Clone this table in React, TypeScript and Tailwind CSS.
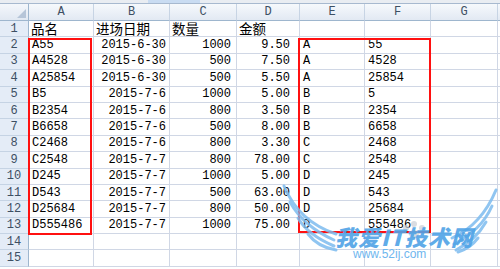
import React from "react";

type Row = string[];

const cols = [
  { letter: "A", w: "w-[65px]", align: "justify-start pl-[3px]" },
  { letter: "B", w: "w-[76px]", align: "justify-end pr-[3px]" },
  { letter: "C", w: "w-[67px]", align: "justify-end pr-[5px]" },
  { letter: "D", w: "w-[63px]", align: "justify-end pr-[9px]" },
  { letter: "E", w: "w-[65px]", align: "justify-start pl-[3px]" },
  { letter: "F", w: "w-[66px]", align: "justify-start pl-[3px]" },
  { letter: "G", w: "w-[67px]", align: "justify-start pl-[3px]" },
  { letter: "", w: "w-[40px]", align: "justify-start pl-[3px]" },
];

const rows: Row[] = [
  ["品名", "进场日期", "数量", "金额", "", ""],
  ["A55", "2015-6-30", "1000", "9.50", "A", "55"],
  ["A4528", "2015-6-30", "500", "7.50", "A", "4528"],
  ["A25854", "2015-6-30", "500", "5.50", "A", "25854"],
  ["B5", "2015-7-6", "1000", "5.00", "B", "5"],
  ["B2354", "2015-7-6", "800", "3.50", "B", "2354"],
  ["B6658", "2015-7-6", "500", "8.00", "B", "6658"],
  ["C2468", "2015-7-6", "800", "3.30", "C", "2468"],
  ["C2548", "2015-7-7", "800", "78.00", "C", "2548"],
  ["D245", "2015-7-7", "1000", "5.00", "D", "245"],
  ["D543", "2015-7-7", "500", "63.00", "D", "543"],
  ["D25684", "2015-7-7", "800", "50.00", "D", "25684"],
  ["D555486", "2015-7-7", "1000", "75.00", "D", "555486"],
  [],
  [],
];

// site watermark stamped over the bottom right of the sheet
const Watermark = () => (
  <div className="absolute left-[280px] top-[180px] w-[220px] h-[89px] pointer-events-none">
    <svg width="220" height="89" viewBox="0 0 220 89" className="absolute left-0 top-0" fill="none">
      <g stroke="#7dbcef" strokeWidth="3" strokeLinecap="round" opacity="0.85">
        <path d="M4 6 C14 30 32 46 56 54" />
        <path d="M10 22 C20 40 36 52 54 60" />
        <path d="M18 38 C26 52 40 60 54 66" />
        <path d="M28 54 C34 62 44 68 56 70" />
        <path d="M216 10 C206 34 190 50 172 58" />
        <path d="M212 26 C204 44 190 56 174 64" />
        <path d="M206 42 C198 56 188 64 176 70" />
        <path d="M198 58 C192 66 184 70 178 72" />
      </g>
      <g fill="#c9ced6" opacity="0.7">
        <circle cx="126" cy="48" r="3" />
        <circle cx="134" cy="44" r="3" />
        <circle cx="142" cy="48" r="3" />
        <ellipse cx="134" cy="54" rx="5" ry="4" />
      </g>
    </svg>
    <div className="absolute left-[55px] top-[45px] text-[22px] leading-none font-black italic tracking-[1px] text-[#4fa3e6] opacity-90 [font-family:'Noto_Sans_CJK_SC',sans-serif]">
      我爱IT技术网
    </div>
    <div className="absolute left-[73px] top-[68px] text-[12px] leading-none text-[#6fb6ee] [font-family:'Liberation_Sans',sans-serif]">
      www.52ij.com
    </div>
  </div>
);

export default function App() {
  return (
    <div className="relative w-[500px] h-[269px] overflow-hidden bg-white text-black [font-family:'Liberation_Mono','Noto_Sans_CJK_SC',monospace]">
      {/* strip left over from the ribbon above */}
      <div className="flex h-[3px] bg-[#e9edf2]">
        <div className="w-[148px]" />
        <div className="w-[52px] bg-[#c9dcf2]" />
      </div>

      {/* column headers */}
      <div className="flex h-[18px] border-t border-[#a7b9cf]">
        <div className="relative w-[29px] shrink-0 border-r border-b border-[#9eb6ce] bg-gradient-to-b from-[#f4f7fb] to-[#e1e8f2]">
          <div className="absolute right-[2px] bottom-[2px] w-0 h-0 border-l-[9px] border-l-transparent border-b-[9px] border-b-[#b6c5d8]" />
        </div>
        {cols.map((c, j) => (
          <div
            key={j}
            className={`${c.w} shrink-0 flex items-center justify-center border-r border-b border-r-[#c7d4e4] border-b-[#9eb6ce] bg-gradient-to-b from-[#f6f9fc] to-[#e2e9f3] text-[12px] leading-none text-[#3d4f63]`}
          >
            {c.letter}
          </div>
        ))}
      </div>

      {/* body */}
      {rows.map((r, i) => (
        <div key={i} className="flex h-[16.4px]">
          <div className="w-[29px] shrink-0 flex items-center justify-center border-r border-b border-r-[#9eb6ce] border-b-[#c5d3e4] bg-[#e4ecf7] text-[12px] leading-none text-[#3d4f63]">
            {i + 1}
          </div>
          {cols.map((c, j) => {
            const v = r[j] ?? "";
            const cjk = i === 0;
            return (
              <div
                key={j}
                className={`${c.w} shrink-0 flex items-center whitespace-nowrap leading-none border-r border-b border-[#d0d7e5] ${
                  cjk ? "justify-start pl-[2px] text-[13.5px] [font-family:'Noto_Sans_CJK_SC',sans-serif]" : `${c.align} text-[12px]`
                }`}
              >
                {v}
              </div>
            );
          })}
        </div>
      ))}

      {/* red highlight boxes */}
      <div className="absolute left-[28px] top-[38px] w-[64px] h-[197px] border-2 border-[#ff1010]" />
      <div className="absolute left-[298px] top-[38px] w-[133px] h-[195px] border-2 border-[#ff1010]" />

      <Watermark />
    </div>
  );
}
